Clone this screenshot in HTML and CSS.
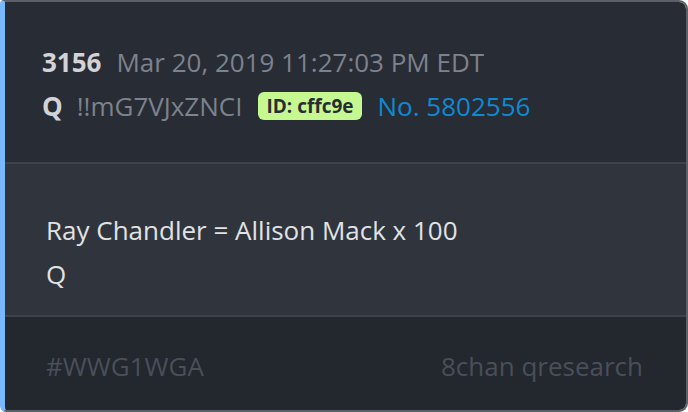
FILE: index.html
```html
<!DOCTYPE html>
<html lang="en">
<head>
    <meta charset="UTF-8">
    <title>Q Post 3156</title>
    <link rel="stylesheet" href="styles.css">
</head>
<body>
    <div class="post">
        <!-- Header -->
        <div class="post-header">
            <div class="meta-line">
                <span class="post-num">3156</span>
                <span class="post-date">Mar 20, 2019 11:27:03 PM EDT</span>
            </div>
            <div class="meta-line">
                <span class="author">Q</span>
                <span class="tripcode">!!mG7VJxZNCI</span>
                <span class="user-id">ID: cffc9e</span>
                <a class="post-link" href="#">No. 5802556</a>
            </div>
        </div>

        <!-- Body -->
        <div class="post-body">
            <p>Ray Chandler = Allison Mack x 100</p>
            <p>Q</p>
        </div>

        <!-- Footer -->
        <div class="post-footer">
            <span class="hashtag">#WWG1WGA</span>
            <span class="source">8chan qresearch</span>
        </div>
    </div>
</body>
</html>
```

FILE: styles.css
```css
/* Global Styles */
body {
    margin: 0;
    background-color: #ffffff;
    font-family: 'Open Sans', sans-serif;
}

/* Post Card */
.post {
    width: 688px;
    height: 412px;
    box-sizing: border-box;
    border: 2px solid #5b6069;
    border-left: 5px solid #79b8ff;
    border-radius: 4px 9px 9px 6px;
    overflow: hidden;
    display: flex;
    flex-direction: column;
}

/* Header */
.post-header {
    background-color: #282c34;
    padding: 38px 20px 34px 37px;
    border-bottom: 2px solid #3d424b;
}

.meta-line {
    display: flex;
    align-items: center;
    height: 44px;
    font-size: 26px;
}

.post-num,
.author {
    font-weight: 700;
    color: #d2d3d6;
}

.post-num {
    margin-right: 15px;
}

.author {
    margin-right: 14px;
}

.post-date,
.tripcode {
    color: #7d828d;
}

.tripcode {
    margin-right: 16px;
}

.user-id {
    background-color: #c6f891;
    color: #282c34;
    font-size: 19px;
    line-height: 26px;
    font-weight: 700;
    padding: 1px 8px;
    border-radius: 6px;
    margin-right: 16px;
}

.post-link {
    color: #0d8ad2;
    text-decoration: none;
}

/* Body */
.post-body {
    background-color: #2f343d;
    padding: 44px 20px 19px 41px;
    border-bottom: 2px solid #3d424b;
}

.post-body p {
    margin: 0;
    font-size: 26px;
    line-height: 44px;
    color: #e1e2e4;
}

/* Footer */
.post-footer {
    flex: 1;
    background-color: #23272e;
    padding: 27px 43px 0 41px;
    display: flex;
    justify-content: space-between;
    font-size: 26px;
    line-height: 44px;
    color: #4a4f59;
}
```
